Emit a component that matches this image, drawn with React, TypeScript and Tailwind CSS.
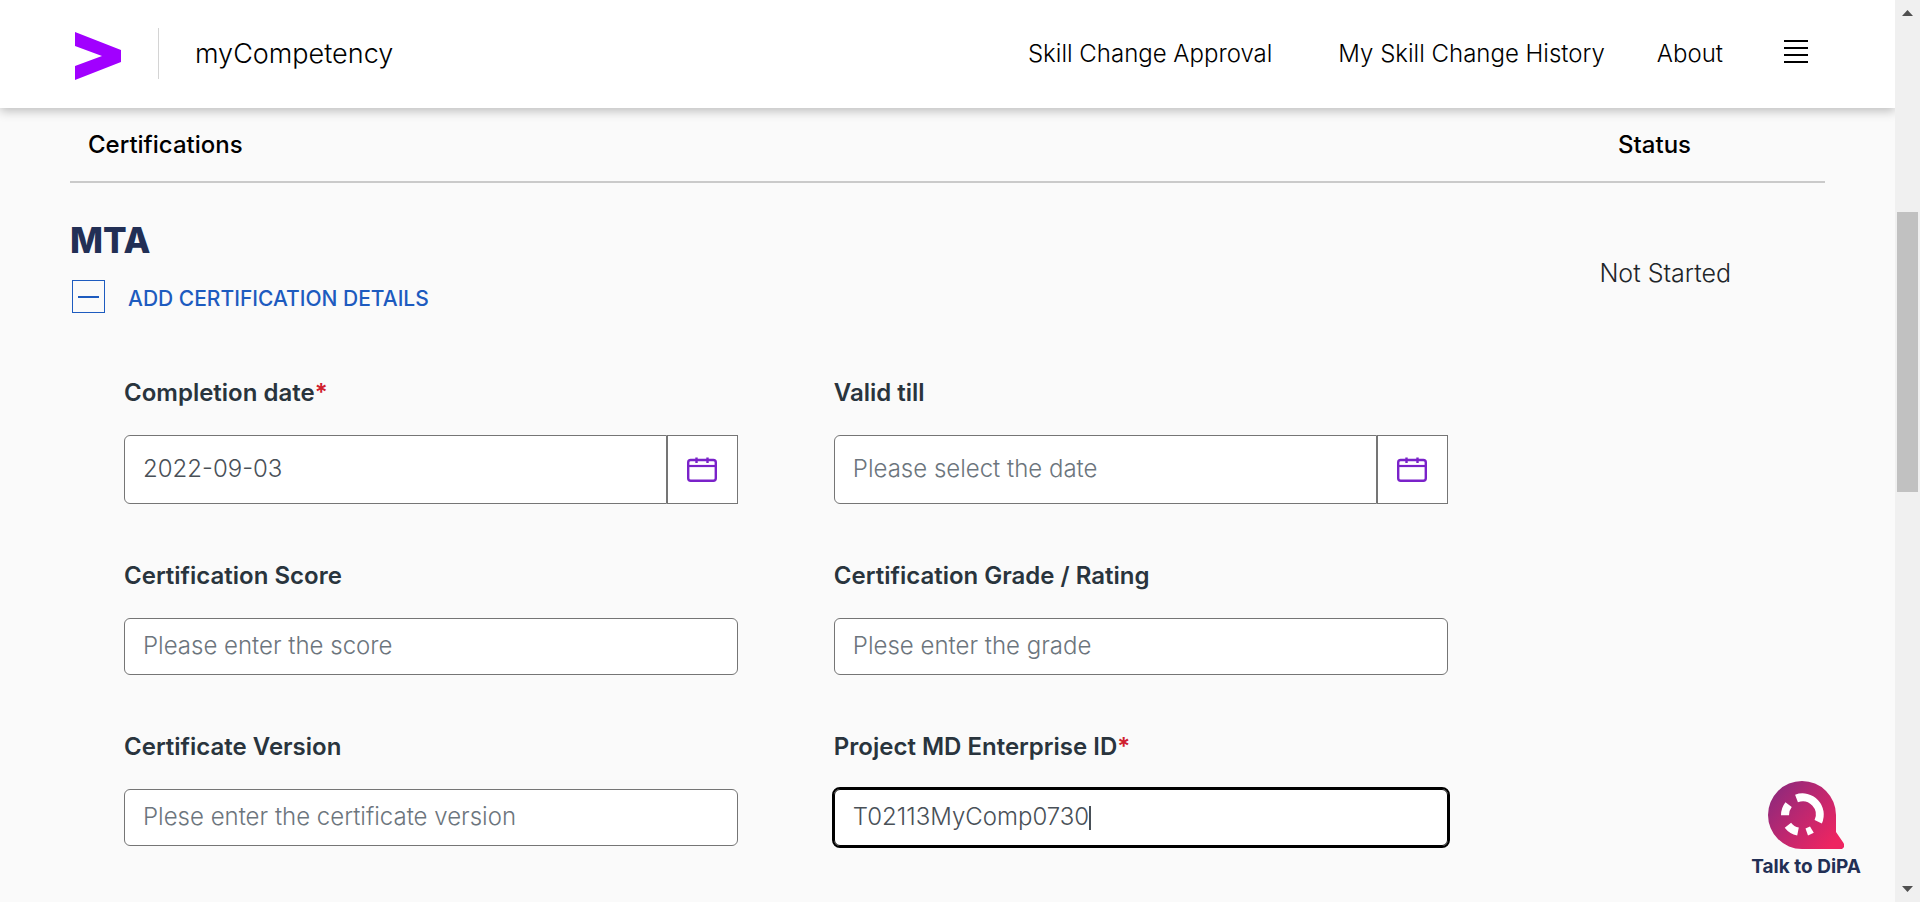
import React, { useId, useState } from "react";

const navLinks = [
  { label: "Skill Change Approval", spacing: "mr-[66px]" },
  { label: "My Skill Change History", spacing: "mr-[52px]" },
  { label: "About", spacing: "mr-[61px]" },
];

function BrandMark() {
  return (
    <svg className="mt-1 h-12 w-[46px] shrink-0" viewBox="0 0 46 48" aria-hidden="true">
      <path d="M0 0 L46 18 V30 L0 48 V34 L27 24 L0 14 Z" fill="#a100ff" />
    </svg>
  );
}

function CalendarIcon() {
  return (
    <svg className="h-[25px] w-[30px]" viewBox="0 0 30 25" fill="none" aria-hidden="true">
      <rect x="1.2" y="3" width="27.6" height="20.8" rx="2.5" stroke="#7a22c9" strokeWidth="2.4" />
      <path d="M1 9 H29" stroke="#7a22c9" strokeWidth="2.2" />
      <path d="M9.5 0.5 V6 M20.5 0.5 V6" stroke="#7a22c9" strokeWidth="2.4" />
    </svg>
  );
}

function Header() {
  return (
    <header className="relative flex h-[108px] items-center bg-white pr-[87px] pl-[75px] text-black shadow-[0_3px_10px_rgba(0,0,0,0.25)]">
      <div className="flex items-start">
        <BrandMark />
        <div className="ml-[37px] h-[51px] w-px bg-[#d4d4d4]" />
      </div>
      <span className="ml-9 text-[27px] font-light">myCompetency</span>
      <nav className="ml-auto flex items-center text-2xl font-light">
        {navLinks.map((link) => (
          <a key={link.label} href="#" className={link.spacing}>
            {link.label}
          </a>
        ))}
      </nav>
      <button type="button" aria-label="Menu" className="flex w-6 flex-col gap-[5px] pb-1.5">
        <span className="h-0.5 w-full bg-black" />
        <span className="h-0.5 w-full bg-black" />
        <span className="h-0.5 w-full bg-black" />
        <span className="h-0.5 w-full bg-black" />
      </button>
    </header>
  );
}

type FieldProps = {
  label: string;
  required?: boolean;
  placeholder?: string;
  initial?: string;
  kind?: "text" | "date" | "active";
};

function Field({ label, required, placeholder, initial = "", kind = "text" }: FieldProps) {
  const id = useId();
  const [value, setValue] = useState(initial);
  const control = {
    id,
    value,
    placeholder,
    required,
    type: "text",
    onChange: (e: React.ChangeEvent<HTMLInputElement>) => setValue(e.target.value),
  };

  return (
    <div className="flex min-w-0 flex-col gap-[26px]">
      <label htmlFor={id} className="text-2xl leading-8 font-semibold text-[#29343d]">
        {label}
        {required && <span className="text-[#d0202e]">*</span>}
      </label>
      {kind === "text" && (
        <input
          {...control}
          className="h-[57px] w-full rounded-md border border-[#757575] bg-white px-[18px] pb-0.5 text-2xl font-light text-[#495057] outline-none placeholder:text-[#6c757d]"
        />
      )}
      {kind === "date" && (
        <div className="flex h-[69px]">
          <input
            {...control}
            className="min-w-0 flex-1 rounded-l-md border border-[#757575] bg-white px-[18px] pb-0.5 text-2xl font-light text-[#495057] outline-none placeholder:text-[#6c757d]"
          />
          <button
            type="button"
            aria-label={"Choose " + label}
            className="flex w-[71px] items-center justify-center border border-[#757575] bg-white"
          >
            <CalendarIcon />
          </button>
        </div>
      )}
      {kind === "active" && (
        <div className="flex h-[57px] items-center rounded-md border border-black bg-white px-[18px] outline-2 outline-black">
          <input
            {...control}
            className="max-w-full bg-transparent pb-0.5 text-2xl font-light text-[#495057] caret-transparent outline-none [field-sizing:content]"
          />
          <span className="h-6 w-0.5 bg-[#495057]" />
        </div>
      )}
    </div>
  );
}

function AssistantButton() {
  return (
    <button type="button" className="absolute right-[34px] bottom-[21px] flex flex-col items-center gap-1">
      <svg className="h-[68px] w-[76px]" viewBox="0 0 76 68" fill="none" aria-hidden="true">
        <defs>
          <linearGradient id="assistant-fill" x1="6" y1="10" x2="66" y2="62" gradientUnits="userSpaceOnUse">
            <stop offset="0" stopColor="#91297b" />
            <stop offset="0.45" stopColor="#bd2770" />
            <stop offset="1" stopColor="#ee2561" />
          </linearGradient>
        </defs>
        <path
          d="M34 0 A34 34 0 0 1 68 34 V51 L75.2 61.5 C77.5 65 75.5 68 72.5 68 H34 A34 34 0 0 1 34 0 Z"
          fill="url(#assistant-fill)"
        />
        <path d="M28.5 17.5 A17.2 17.2 0 0 1 50.2 40.8" stroke="#fff" strokeWidth="8" />
        <path d="M17 34.3 A17 17 0 0 1 20.6 23.6" stroke="#fff" strokeWidth="8" />
        <path d="M19.9 44.2 A17 17 0 0 0 30 50.5" stroke="#fff" strokeWidth="8" />
        <path d="M37.5 47.5 L42 45.5 L45.8 51.8 L40 54.5 Z" fill="#fff" />
      </svg>
      <span className="text-[19px] leading-7 font-bold text-[#222f55]">Talk to DiPA</span>
    </button>
  );
}

function ScrollRail() {
  return (
    <div className="z-10 flex w-[25px] shrink-0 flex-col items-center bg-[#f0f0f0] py-2.5" aria-hidden="true">
      <svg className="h-1.5 w-[11px]" viewBox="0 0 11 6">
        <path d="M5.5 0 L11 6 H0 Z" fill="#505050" />
      </svg>
      <div className="mt-[196px] h-[280px] w-[21px] bg-[#c1c1c1]" />
      <svg className="mt-auto h-1.5 w-[11px]" viewBox="0 0 11 6">
        <path d="M0 0 H11 L5.5 6 Z" fill="#505050" />
      </svg>
    </div>
  );
}

export default function App() {
  return (
    <div className="flex min-h-screen bg-[#fafafa] font-['Inter','Liberation_Sans',sans-serif]">
      <div className="relative min-w-0 flex-1">
        <Header />
        <main className="px-[70px] pb-14">
          <div className="flex h-[75px] items-center justify-between border-b-2 border-[#cacaca] pr-[134px] pl-[18px] text-2xl font-medium text-black">
            <h2>Certifications</h2>
            <h2>Status</h2>
          </div>

          <section className="flex items-start justify-between pt-[37px] pr-[94px]">
            <div>
              <h1 className="text-[35px] leading-10 font-extrabold text-[#222f55]">MTA</h1>
              <button type="button" aria-expanded="true" className="mt-5 ml-0.5 flex items-center gap-[23px] text-[#1d5bbf]">
                <span className="flex size-[33px] items-center justify-center border border-[#1d5bbf]">
                  <span className="h-0.5 w-[21px] bg-[#1d5bbf]" />
                </span>
                <span className="pt-1 text-[21px] leading-7 font-medium">ADD CERTIFICATION DETAILS</span>
              </button>
            </div>
            <p className="mt-[37px] text-[25px] leading-8 font-light text-[#212529]">Not Started</p>
          </section>

          <form className="mt-16 mr-[21.5%] ml-[54px] grid grid-cols-2 gap-x-24 gap-y-14">
            <Field label="Completion date" required kind="date" initial="2022-09-03" />
            <Field label="Valid till" kind="date" placeholder="Please select the date" />
            <Field label="Certification Score" placeholder="Please enter the score" />
            <Field label="Certification Grade / Rating" placeholder="Plese enter the grade" />
            <Field label="Certificate Version" placeholder="Plese enter the certificate version" />
            <Field label="Project MD Enterprise ID" required kind="active" initial="T02113MyComp0730" />
          </form>
        </main>
        <AssistantButton />
      </div>
      <ScrollRail />
    </div>
  );
}
